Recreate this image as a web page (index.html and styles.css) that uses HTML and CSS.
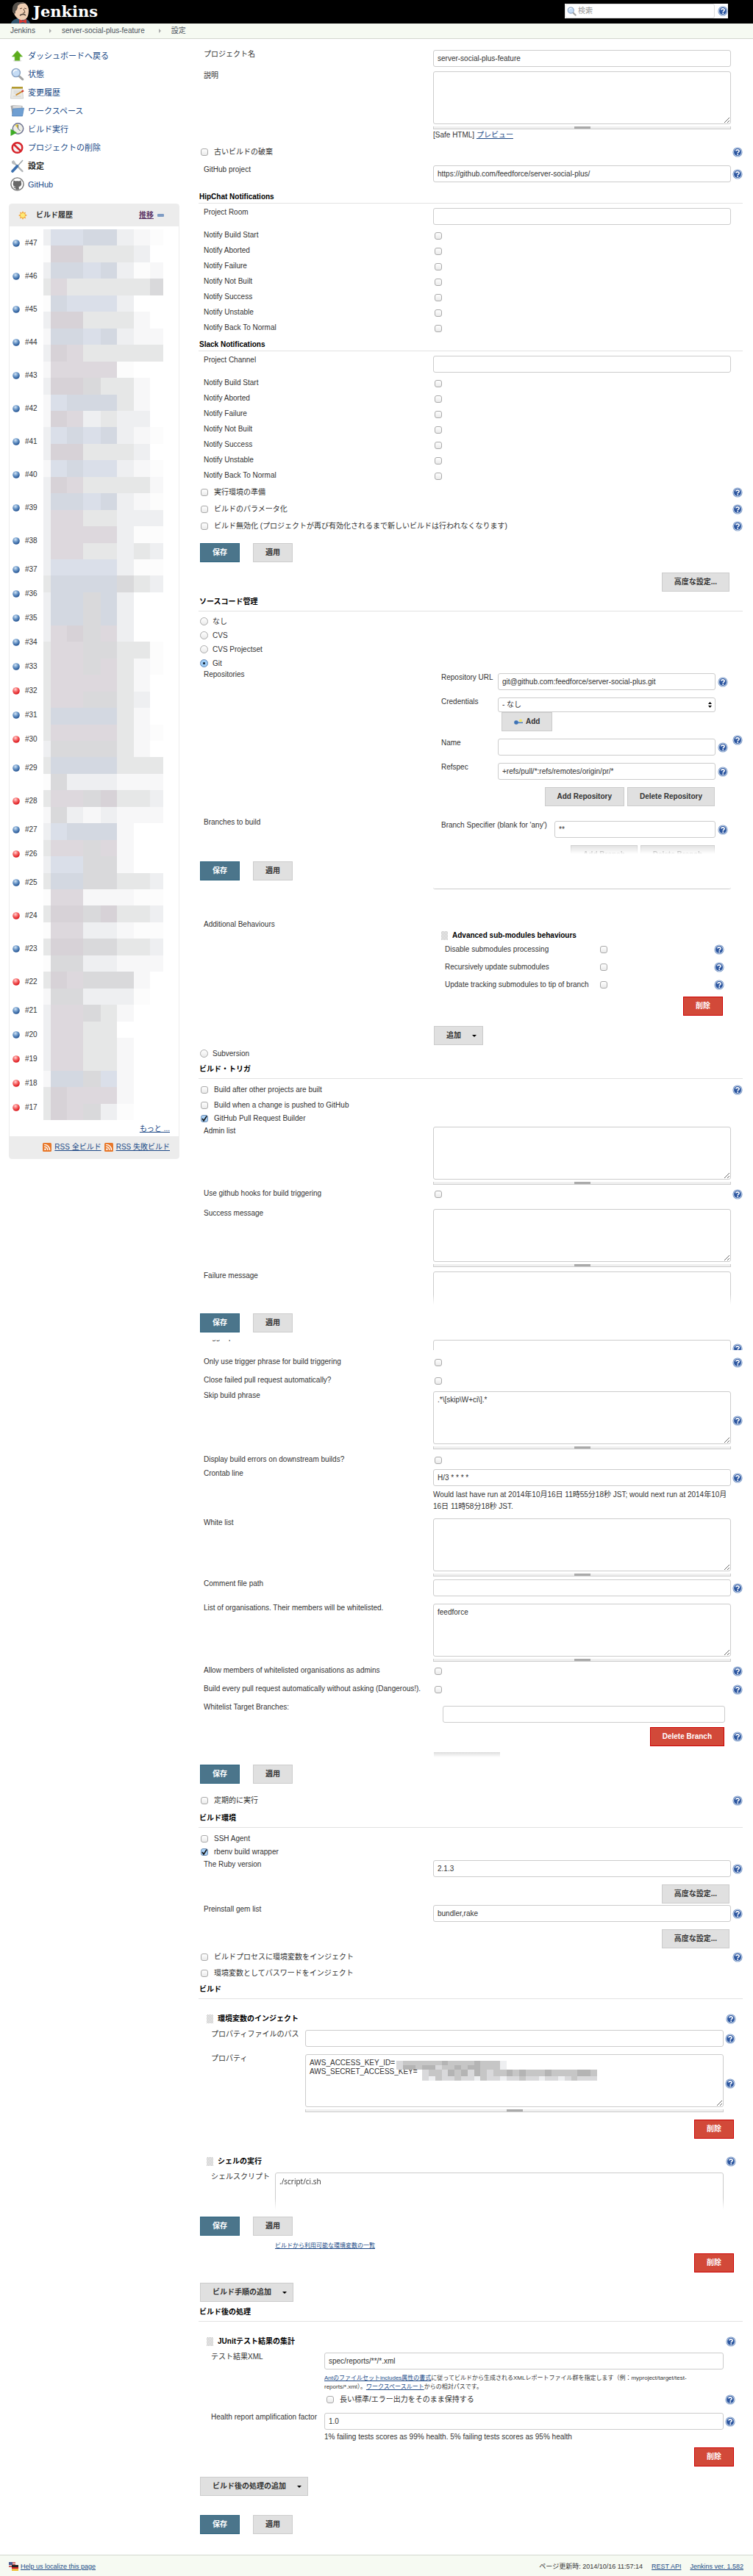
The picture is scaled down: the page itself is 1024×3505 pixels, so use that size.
FILE: index.html
```html
<!DOCTYPE html>
<html lang="ja">
<head>
<meta charset="utf-8">
<meta name="viewport" content="width=device-width, initial-scale=1">
<title>server-social-plus-feature 設定 [Jenkins]</title>
<link rel="stylesheet" href="styles.css">
</head>
<body>
<svg class="sprite" aria-hidden="true">
  <defs>
    <radialGradient id="gBlue" cx="40%" cy="30%" r="70%"><stop offset="0" stop-color="#d5e4f3"/><stop offset=".45" stop-color="#6f9bcb"/><stop offset="1" stop-color="#1f4f8f"/></radialGradient>
    <radialGradient id="gRed" cx="40%" cy="30%" r="70%"><stop offset="0" stop-color="#ffd5d5"/><stop offset=".45" stop-color="#f76a6a"/><stop offset="1" stop-color="#d80f14"/></radialGradient>
  </defs>
  <symbol id="help" viewBox="0 0 14 14"><circle cx="7" cy="7" r="6.6" fill="#7f9cc8"/><circle cx="7" cy="7" r="5.7" fill="#d4e0f0"/><circle cx="7" cy="7" r="4.9" fill="#2c56a0"/><path d="M4.9 5.6C4.9 3.4 9.2 3.3 9.2 5.6C9.2 7 7.2 6.9 7.2 8.5" fill="none" stroke="#fff" stroke-width="1.6"/><circle cx="7.2" cy="10.2" r=".95" fill="#fff"/></symbol>
  <symbol id="ball-blue" viewBox="0 0 10 10"><circle cx="5" cy="5" r="4.8" fill="url(#gBlue)"/></symbol>
  <symbol id="ball-red" viewBox="0 0 10 10"><circle cx="5" cy="5" r="4.8" fill="url(#gRed)"/></symbol>
  <symbol id="rss" viewBox="0 0 12 12"><rect width="12" height="12" rx="1.5" fill="#e8782a"/><circle cx="3.4" cy="8.8" r="1.2" fill="#fff"/><path d="M2.2 5.2a4.6 4.6 0 0 1 4.6 4.7M2.2 2.4a7.4 7.4 0 0 1 7.4 7.5" fill="none" stroke="#fff" stroke-width="1.4"/></symbol>
  <symbol id="lens" viewBox="0 0 18 18"><path d="M11.3 11.3l4.9 4.6" stroke="#a4a4a4" stroke-width="3" stroke-linecap="round"/><circle cx="7.3" cy="7" r="5.6" fill="#c5dcf5" stroke="#8ba4c4" stroke-width="1.5"/><path d="M3.8 6.5a3.6 3.6 0 0 1 5-3" fill="none" stroke="#fff" stroke-width="1.4"/></symbol>
</svg>

<header class="topbar">
  <a class="logo" href="#">
    <svg width="26" height="29" viewBox="0 0 26 29" aria-hidden="true"><path d="M0 29C1 25 5 23 9 22h8c5 1 8 3 9 7z" fill="#33566f"/><path d="M9 21l4 5 4-5z" fill="#fff"/><path d="M3 9C3 2 8 0 13 0s11 3 11 11c0 7-2 13-8 13-7 0-11-5-12-9C2 14 2 11 3 9z" fill="#efcfb4"/><path d="M2 12C1 3 7-1 13 0c3 0 5 1 7 2-5-1-9 0-11 3 0 3-1 6-3 7 0 2 0 3-1 4-1-1-2-2-3-4z" fill="#56514b"/><path d="M12 9l3-1M18 8l3 1M17 9l2 5-3 1" fill="none" stroke="#604838"/><path d="M12 18c3-2 6-2 8 0" fill="none" stroke="#51453d" stroke-width="1.6"/><path d="M11 23l5 2 5-2v6l-5-2-5 2z" fill="#d33833"/></svg>
    <span>Jenkins</span>
  </a>
  <form class="search">
    <label class="search-box"><svg width="13" height="13"><use href="#lens"/></svg><input type="text" placeholder="検索" aria-label="検索"></label>
    <a class="help" href="#" aria-label="ヘルプ"><svg width="14" height="14"><use href="#help"/></svg></a>
  </form>
</header>

<nav class="crumbs"><a href="#">Jenkins</a><i></i><a href="#">server-social-plus-feature</a><i></i><a href="#">設定</a></nav>

<div class="page">
<aside class="side">
  <nav class="tasks">
    <a href="#"><svg width="18" height="18" viewBox="0 0 18 18"><ellipse cx="9" cy="15.8" rx="6" ry="1" fill="#ddd"/><path d="M9 2l7 8h-3.6v5.3H5.6V10H2z" fill="#5cab1c" stroke="#74bd42" stroke-width=".7"/></svg>ダッシュボードへ戻る</a>
    <a href="#"><svg width="18" height="18"><use href="#lens"/></svg>状態</a>
    <a href="#"><svg width="18" height="18" viewBox="0 0 18 18"><path d="M1 3h15l1 14H0z" fill="#ebebe7" stroke="#b9b9b5" stroke-width=".6"/><path d="M1.5 1h15v2.6h-15z" fill="#b39a2e"/><path d="M4 7h9M4 9.500h6M3 14h11" stroke="#c8c8c8" stroke-width=".8"/><path d="M7 12.500l8.500-5" stroke="#c98a2a" stroke-width="2"/><path d="M15 7.800l2.500-1.500" stroke="#d2392d" stroke-width="2.200"/></svg>変更履歴</a>
    <a href="#"><svg width="18" height="18" viewBox="0 0 18 18"><path d="M0 2l4-1 12 1v11H2z" fill="#a8a8a8"/><path d="M3 1.500h12v7H3z" fill="#d8d8d8"/><path d="M3 6l15-1-2 11H2z" fill="#6f9fd2" stroke="#4d80b8" stroke-width=".7"/></svg>ワークスペース</a>
    <a href="#"><svg width="18" height="18" viewBox="0 0 18 18"><circle cx="10" cy="8" r="7.200" fill="#eeeee6" stroke="#6d7391" stroke-width="1.500"/><path d="M10 8L6 3.500a6 6 0 0 1 4-1.500z" fill="#e2c637"/><path d="M10 3v5l3 3" fill="none" stroke="#56607a"/><path d="M0 8.500l8.500 5L0 18z" fill="#3eab25"/></svg>ビルド実行</a>
    <a href="#"><svg width="18" height="18" viewBox="0 0 18 18"><circle cx="9" cy="9" r="6.800" fill="#f4f4f4" stroke="#d7242b" stroke-width="2.500"/><path d="M4.300 4.500l9.400 9" stroke="#d7242b" stroke-width="2.500"/></svg>プロジェクトの削除</a>
    <a class="current" href="#"><svg width="18" height="18" viewBox="0 0 18 18"><path d="M3 3l8 8 5 5" stroke="#b0b4b6" stroke-width="2.400" stroke-linecap="round"/><path d="M1.500 3a3 3 0 0 0 4 3.500L6.500 4 4 1" fill="#b8bcbe"/><path d="M16.500 1L9 9.500" stroke="#9da4a8" stroke-width="1.500"/><path d="M9 9l-6.500 7" stroke="#3b6fae" stroke-width="3.600" stroke-linecap="round"/></svg>設定</a>
    <a href="#"><svg width="19" height="19" viewBox="0 0 19 19"><circle cx="9.500" cy="9.500" r="8.600" fill="#fff" stroke="#777" stroke-width="1.400"/><path d="M4.500 4.300l2.500 1.200c1.700-.5 3.300-.5 5 0l2.500-1.200.4 3.200c1 3.700-.9 5.300-3.600 5.700l.5 1v2.600c-1.500.6-3.100.6-4.600 0v-1.700C5 15.500 5 13.700 4 13l2.900.7.4-.5C4.500 12.700 3 11 4.100 7.500z" fill="#686868"/></svg>GitHub</a>
  </nav>

  <section class="history">
    <div class="history-head"><svg width="12" height="12" viewBox="0 0 12 12"><path d="M6 0l1.300 2.500L10 1.500l-.8 2.700L12 6 9.200 7.500l1 3-2.800-1L6 12 4.600 9.500 1.800 10.500l1-2.800L0 6l2.800-1.600L2 1.500l2.700 1z" fill="#f4aa39"/><circle cx="6" cy="6" r="3" fill="#fdea76"/></svg><b>ビルド履歴</b><a href="#">推移</a><svg class="minus" width="9" height="4" viewBox="0 0 9 4"><rect width="9" height="4" rx="1" fill="#7f9cc4"/></svg></div>
    <div class="history-body">
      <ul class="builds" id="builds">
        <li class="tall"><svg width="10" height="10"><use href="#ball-blue"/></svg><a href="#">#47</a></li>
        <li class="tall"><svg width="10" height="10"><use href="#ball-blue"/></svg><a href="#">#46</a></li>
        <li class="tall"><svg width="10" height="10"><use href="#ball-blue"/></svg><a href="#">#45</a></li>
        <li class="tall"><svg width="10" height="10"><use href="#ball-blue"/></svg><a href="#">#44</a></li>
        <li class="tall"><svg width="10" height="10"><use href="#ball-blue"/></svg><a href="#">#43</a></li>
        <li class="tall"><svg width="10" height="10"><use href="#ball-blue"/></svg><a href="#">#42</a></li>
        <li class="tall"><svg width="10" height="10"><use href="#ball-blue"/></svg><a href="#">#41</a></li>
        <li class="tall"><svg width="10" height="10"><use href="#ball-blue"/></svg><a href="#">#40</a></li>
        <li class="tall"><svg width="10" height="10"><use href="#ball-blue"/></svg><a href="#">#39</a></li>
        <li class="tall"><svg width="10" height="10"><use href="#ball-blue"/></svg><a href="#">#38</a></li>
        <li><svg width="10" height="10"><use href="#ball-blue"/></svg><a href="#">#37</a></li>
        <li><svg width="10" height="10"><use href="#ball-blue"/></svg><a href="#">#36</a></li>
        <li><svg width="10" height="10"><use href="#ball-blue"/></svg><a href="#">#35</a></li>
        <li><svg width="10" height="10"><use href="#ball-blue"/></svg><a href="#">#34</a></li>
        <li><svg width="10" height="10"><use href="#ball-blue"/></svg><a href="#">#33</a></li>
        <li><svg width="10" height="10"><use href="#ball-red"/></svg><a href="#">#32</a></li>
        <li><svg width="10" height="10"><use href="#ball-blue"/></svg><a href="#">#31</a></li>
        <li><svg width="10" height="10"><use href="#ball-red"/></svg><a href="#">#30</a></li>
        <li class="tall"><svg width="10" height="10"><use href="#ball-blue"/></svg><a href="#">#29</a></li>
        <li class="tall"><svg width="10" height="10"><use href="#ball-red"/></svg><a href="#">#28</a></li>
        <li><svg width="10" height="10"><use href="#ball-blue"/></svg><a href="#">#27</a></li>
        <li><svg width="10" height="10"><use href="#ball-red"/></svg><a href="#">#26</a></li>
        <li class="tall"><svg width="10" height="10"><use href="#ball-blue"/></svg><a href="#">#25</a></li>
        <li class="tall"><svg width="10" height="10"><use href="#ball-red"/></svg><a href="#">#24</a></li>
        <li class="tall"><svg width="10" height="10"><use href="#ball-blue"/></svg><a href="#">#23</a></li>
        <li class="tall"><svg width="10" height="10"><use href="#ball-red"/></svg><a href="#">#22</a></li>
        <li><svg width="10" height="10"><use href="#ball-blue"/></svg><a href="#">#21</a></li>
        <li><svg width="10" height="10"><use href="#ball-blue"/></svg><a href="#">#20</a></li>
        <li><svg width="10" height="10"><use href="#ball-red"/></svg><a href="#">#19</a></li>
        <li><svg width="10" height="10"><use href="#ball-red"/></svg><a href="#">#18</a></li>
        <li><svg width="10" height="10"><use href="#ball-red"/></svg><a href="#">#17</a></li>
      </ul>
      <svg class="mosaic" id="mosaic" width="163" height="1212" viewBox="0 0 163 1212" aria-hidden="true"></svg>
    </div>
    <div class="history-more"><a href="#">もっと ...</a></div>
    <div class="history-foot"><svg width="12" height="12"><use href="#rss"/></svg><a href="#">RSS 全ビルド</a><svg width="12" height="12"><use href="#rss"/></svg><a href="#">RSS 失敗ビルド</a></div>
  </section>
</aside>

<main class="main">
<form class="config">
  <div class="row"><label for="name">プロジェクト名</label><input class="field" id="name" type="text" value="server-social-plus-feature"></div>
  <div class="row mt6"><label for="desc">説明</label><div><textarea class="area" id="desc"></textarea><div class="grip-bar"></div><p class="note">[Safe HTML] <a href="#">プレビュー</a></p></div></div>
  <div class="option mt4"><label><input type="checkbox">古いビルドの破棄</label><a class="help" href="#" aria-label="ヘルプ"><svg width="14" height="14"><use href="#help"/></svg></a></div>
  <div class="row mt8"><label for="ghp">GitHub project</label><input class="field" id="ghp" type="text" value="https://github.com/feedforce/server-social-plus/"><a class="help" href="#" aria-label="ヘルプ"><svg width="14" height="14"><use href="#help"/></svg></a></div>

  <h2 class="latin mt12">HipChat Notifications</h2>
  <div class="row mt6"><label for="room">Project Room</label><input class="field" id="room" type="text"></div>
  <div class="row check mt4"><label for="h1">Notify Build Start</label><input id="h1" type="checkbox"></div>
  <div class="row check"><label for="h2">Notify Aborted</label><input id="h2" type="checkbox"></div>
  <div class="row check"><label for="h3">Notify Failure</label><input id="h3" type="checkbox"></div>
  <div class="row check"><label for="h4">Notify Not Built</label><input id="h4" type="checkbox"></div>
  <div class="row check"><label for="h5">Notify Success</label><input id="h5" type="checkbox"></div>
  <div class="row check"><label for="h6">Notify Unstable</label><input id="h6" type="checkbox"></div>
  <div class="row check"><label for="h7">Notify Back To Normal</label><input id="h7" type="checkbox"></div>

  <h2 class="latin mt4">Slack Notifications</h2>
  <div class="row mt6"><label for="channel">Project Channel</label><input class="field" id="channel" type="text"></div>
  <div class="row check mt4"><label for="s1">Notify Build Start</label><input id="s1" type="checkbox"></div>
  <div class="row check"><label for="s2">Notify Aborted</label><input id="s2" type="checkbox"></div>
  <div class="row check"><label for="s3">Notify Failure</label><input id="s3" type="checkbox"></div>
  <div class="row check"><label for="s4">Notify Not Built</label><input id="s4" type="checkbox"></div>
  <div class="row check"><label for="s5">Notify Success</label><input id="s5" type="checkbox"></div>
  <div class="row check"><label for="s6">Notify Unstable</label><input id="s6" type="checkbox"></div>
  <div class="row check"><label for="s7">Notify Back To Normal</label><input id="s7" type="checkbox"></div>
  <div class="option roomy"><label><input type="checkbox">実行環境の準備</label><a class="help" href="#" aria-label="ヘルプ"><svg width="14" height="14"><use href="#help"/></svg></a></div>
  <div class="option roomy"><label><input type="checkbox">ビルドのパラメータ化</label><a class="help" href="#" aria-label="ヘルプ"><svg width="14" height="14"><use href="#help"/></svg></a></div>
  <div class="option roomy"><label><input type="checkbox">ビルド無効化 (プロジェクトが再び有効化されるまで新しいビルドは行われなくなります)</label><a class="help" href="#" aria-label="ヘルプ"><svg width="14" height="14"><use href="#help"/></svg></a></div>

  <div class="savebar mt12"><button class="btn primary" type="submit">保存</button><button class="btn" type="button">適用</button></div>
  <div class="actions mt14"><button class="btn" type="button">高度な設定...</button></div>

  <h2 class="mt2">ソースコード管理</h2>
  <div class="radio mt4"><label><input type="radio" name="scm">なし</label></div>
  <div class="radio"><label><input type="radio" name="scm">CVS</label></div>
  <div class="radio"><label><input type="radio" name="scm">CVS Projectset</label></div>
  <div class="radio"><label><input type="radio" name="scm" checked>Git</label></div>
  <div class="row"><span class="label">Repositories</span>
    <div class="nested repo">
      <label for="url">Repository URL</label><input class="field" id="url" type="text" value="git@github.com:feedforce/server-social-plus.git"><a class="help" href="#" aria-label="ヘルプ"><svg width="14" height="14"><use href="#help"/></svg></a>
      <label for="cred">Credentials</label><div><select class="select" id="cred"><option>- なし</option></select><button class="btn add" type="button"><svg width="12" height="9" viewBox="0 0 12 9"><circle cx="3" cy="5" r="2.800" fill="#3e73b5"/><path d="M5 4.500h7v1.600H5z" fill="#4b7fc0"/><circle cx="9" cy="2.400" r="2" fill="#f3e66b"/></svg>Add</button></div><span></span>
      <label for="rname">Name</label><input class="field" id="rname" type="text"><a class="help" href="#" aria-label="ヘルプ"><svg width="14" height="14"><use href="#help"/></svg></a>
      <label for="refspec">Refspec</label><input class="field" id="refspec" type="text" value="+refs/pull/*:refs/remotes/origin/pr/*"><a class="help" href="#" aria-label="ヘルプ"><svg width="14" height="14"><use href="#help"/></svg></a>
      <div class="pair"><button class="btn" type="button">Add Repository</button><button class="btn" type="button">Delete Repository</button></div>
    </div>
    <a class="help" href="#" aria-label="ヘルプ"><svg width="14" height="14"><use href="#help"/></svg></a>
  </div>
  <div class="row mt12"><span class="label">Branches to build</span>
    <div class="nested branch">
      <label for="spec">Branch Specifier (blank for 'any')</label><input class="field" id="spec" type="text" value="**"><a class="help" href="#" aria-label="ヘルプ"><svg width="14" height="14"><use href="#help"/></svg></a>
      <div class="pair cut"><button class="btn" type="button">Add Branch</button><button class="btn" type="button">Delete Branch</button></div>
    </div>
  </div>

  <div class="savebar mt10"><button class="btn primary" type="submit">保存</button><button class="btn" type="button">適用</button></div>
  <div class="row mt8"><span></span><div class="edge"></div></div>
  <div class="row mt42"><span class="label">Additional Behaviours</span>
    <div class="behaviours">
      <h3><i class="drag"></i>Advanced sub-modules behaviours</h3>
      <div class="sub"><label for="b1">Disable submodules processing</label><input id="b1" type="checkbox"><a class="help" href="#" aria-label="ヘルプ"><svg width="14" height="14"><use href="#help"/></svg></a></div>
      <div class="sub"><label for="b2">Recursively update submodules</label><input id="b2" type="checkbox"><a class="help" href="#" aria-label="ヘルプ"><svg width="14" height="14"><use href="#help"/></svg></a></div>
      <div class="sub"><label for="b3">Update tracking submodules to tip of branch</label><input id="b3" type="checkbox"><a class="help" href="#" aria-label="ヘルプ"><svg width="14" height="14"><use href="#help"/></svg></a></div>
      <div class="right mt4"><button class="btn danger" type="button">削除</button></div>
      <button class="btn menu mt14" type="button">追加<i></i></button>
    </div>
  </div>
  <div class="radio mt2"><label><input type="radio" name="scm">Subversion</label></div>

  <h2>ビルド・トリガ</h2>
  <div class="option mt4"><label><input type="checkbox">Build after other projects are built</label><a class="help" href="#" aria-label="ヘルプ"><svg width="14" height="14"><use href="#help"/></svg></a></div>
  <div class="option"><label><input type="checkbox">Build when a change is pushed to GitHub</label></div>
  <div class="option tight"><label><input type="checkbox" checked>GitHub Pull Request Builder</label></div>
  <div class="row mt4"><label for="admins">Admin list</label><div><textarea class="area" id="admins"></textarea><div class="grip-bar"></div></div></div>
  <div class="row check mt2"><label for="hooks">Use github hooks for build triggering</label><input id="hooks" type="checkbox"><a class="help" href="#" aria-label="ヘルプ"><svg width="14" height="14"><use href="#help"/></svg></a></div>
  <div class="row mt10"><label for="ok">Success message</label><div><textarea class="area" id="ok"></textarea><div class="grip-bar"></div></div></div>
  <div class="row mt6"><label for="ng">Failure message</label><div class="fade"><textarea class="area open" id="ng"></textarea></div></div>

  <div class="savebar mt12"><button class="btn primary" type="submit">保存</button><button class="btn" type="button">適用</button></div>
  <div class="row peek mt10"><label for="phrase">Trigger phrase</label><input class="field" id="phrase" type="text"><a class="help" href="#" aria-label="ヘルプ"><svg width="14" height="14"><use href="#help"/></svg></a></div>
  <div class="row check mt6"><label for="only">Only use trigger phrase for build triggering</label><input id="only" type="checkbox"><a class="help" href="#" aria-label="ヘルプ"><svg width="14" height="14"><use href="#help"/></svg></a></div>
  <div class="row check mt4"><label for="close">Close failed pull request automatically?</label><input id="close" type="checkbox"></div>
  <div class="row mt4"><label for="skip">Skip build phrase</label><div><textarea class="area" id="skip">.*\[skip\W+ci\].*</textarea><div class="grip-bar"></div></div><a class="help" href="#" aria-label="ヘルプ"><svg width="14" height="14"><use href="#help"/></svg></a></div>
  <div class="row check mt4"><label for="errs">Display build errors on downstream builds?</label><input id="errs" type="checkbox"></div>
  <div class="row mt2"><label for="cron">Crontab line</label><input class="field" id="cron" type="text" value="H/3 * * * *"><a class="help" href="#" aria-label="ヘルプ"><svg width="14" height="14"><use href="#help"/></svg></a><p class="note under mt4">Would last have run at 2014年10月16日 11時55分18秒 JST; would next run at 2014年<wbr>10月16日 11時58分18秒 JST.</p></div>
  <div class="row mt8"><label for="white">White list</label><div><textarea class="area" id="white"></textarea><div class="grip-bar"></div></div></div>
  <div class="row mt4"><label for="cfp">Comment file path</label><input class="field" id="cfp" type="text"><a class="help" href="#" aria-label="ヘルプ"><svg width="14" height="14"><use href="#help"/></svg></a></div>
  <div class="row mt10"><label for="orgs">List of organisations. Their members will be whitelisted.</label><div><textarea class="area" id="orgs">feedforce</textarea><div class="grip-bar"></div></div></div>
  <div class="row check mt2"><label for="allow">Allow members of whitelisted organisations as admins</label><input id="allow" type="checkbox"><a class="help" href="#" aria-label="ヘルプ"><svg width="14" height="14"><use href="#help"/></svg></a></div>
  <div class="row check mt4"><label for="every">Build every pull request automatically without asking (Dangerous!).</label><input id="every" type="checkbox"><a class="help" href="#" aria-label="ヘルプ"><svg width="14" height="14"><use href="#help"/></svg></a></div>
  <div class="row mt8"><label for="target">Whitelist Target Branches:</label><div class="targets"><input class="field" id="target" type="text"><div class="right mt6"><button class="btn danger" type="button">Delete Branch</button></div></div><a class="help low" href="#" aria-label="ヘルプ"><svg width="14" height="14"><use href="#help"/></svg></a></div>
  <div class="row mt8"><span></span><div class="sliver"></div></div>

  <div class="savebar mt10"><button class="btn primary" type="submit">保存</button><button class="btn" type="button">適用</button></div>
  <div class="option mt12"><label><input type="checkbox">定期的に実行</label><a class="help" href="#" aria-label="ヘルプ"><svg width="14" height="14"><use href="#help"/></svg></a></div>

  <h2 class="mt2">ビルド環境</h2>
  <div class="option mt4"><label><input type="checkbox">SSH Agent</label></div>
  <div class="option tight"><label><input type="checkbox" checked>rbenv build wrapper</label></div>
  <div class="row mt4"><label for="ruby">The Ruby version</label><input class="field" id="ruby" type="text" value="2.1.3"><a class="help" href="#" aria-label="ヘルプ"><svg width="14" height="14"><use href="#help"/></svg></a></div>
  <div class="actions mt10"><button class="btn" type="button">高度な設定...</button></div>
  <div class="row mt2"><label for="gems">Preinstall gem list</label><input class="field" id="gems" type="text" value="bundler,rake"><a class="help" href="#" aria-label="ヘルプ"><svg width="14" height="14"><use href="#help"/></svg></a></div>
  <div class="actions mt10"><button class="btn" type="button">高度な設定...</button></div>
  <div class="option roomy"><label><input type="checkbox">ビルドプロセスに環境変数をインジェクト</label><a class="help" href="#" aria-label="ヘルプ"><svg width="14" height="14"><use href="#help"/></svg></a></div>
  <div class="option"><label><input type="checkbox">環境変数としてパスワードをインジェクト</label></div>

  <h2>ビルド</h2>
  <section class="step mt20">
    <h3><i class="drag"></i>環境変数のインジェクト<a class="help" href="#" aria-label="ヘルプ"><svg width="14" height="14"><use href="#help"/></svg></a></h3>
    <div class="fields inject mt8">
      <label for="ppath">プロパティファイルのパス</label><input class="field" id="ppath" type="text"><a class="help" href="#" aria-label="ヘルプ"><svg width="14" height="14"><use href="#help"/></svg></a>
      <label for="props">プロパティ</label><div class="redacted"><textarea class="area" id="props">AWS_ACCESS_KEY_ID=
AWS_SECRET_ACCESS_KEY=</textarea><svg class="mask" id="mask" width="274" height="31" viewBox="0 0 274 31" aria-hidden="true"></svg><div class="grip-bar"></div></div><a class="help" href="#" aria-label="ヘルプ"><svg width="14" height="14"><use href="#help"/></svg></a>
    </div>
    <div class="right mt10"><button class="btn danger" type="button">削除</button></div>
  </section>
  <section class="step mt24">
    <h3><i class="drag"></i>シェルの実行<a class="help" href="#" aria-label="ヘルプ"><svg width="14" height="14"><use href="#help"/></svg></a></h3>
    <div class="fields shell mt8"><label for="sh">シェルスクリプト</label><div class="fade tall"><textarea class="area open sans" id="sh">./script/ci.sh</textarea></div></div>
  </section>

  <div class="savebar mt10"><button class="btn primary" type="submit">保存</button><button class="btn" type="button">適用</button></div>
  <section class="step mt8">
    <div class="fields shell"><span></span><p class="tiny"><a href="#">ビルドから利用可能な環境変数の一覧</a></p></div>
    <div class="right mt4"><button class="btn danger" type="button">削除</button></div>
  </section>
  <div class="mt14"><button class="btn menu" type="button">ビルド手順の追加<i></i></button></div>

  <h2 class="mt2">ビルド後の処理</h2>
  <section class="step mt20">
    <h3><i class="drag"></i>JUnitテスト結果の集計<a class="help" href="#" aria-label="ヘルプ"><svg width="14" height="14"><use href="#help"/></svg></a></h3>
    <div class="fields junit mt8">
      <label for="xml">テスト結果XML</label><div><input class="field" id="xml" type="text" value="spec/reports/**/*.xml"><p class="tiny mt6"><a href="#">Antのファイルセットincludes属性の書式</a>に従ってビルドから生成されるXMLレポートファイル群を指定します（例：myproject/target/test-<br>reports/*.xml）。<a href="#">ワークスペースルート</a>からの相対パスです。</p></div><span></span>
      <span></span><label class="keep"><input type="checkbox">長い標準/エラー出力をそのまま保持する</label><a class="help" href="#" aria-label="ヘルプ"><svg width="14" height="14"><use href="#help"/></svg></a>
      <label class="mt8" for="factor">Health report amplification factor</label><input class="field mt8" id="factor" type="text" value="1.0"><a class="help mt8" href="#" aria-label="ヘルプ"><svg width="14" height="14"><use href="#help"/></svg></a>
      <span></span><p class="note mt2">1% failing tests scores as 99% health. 5% failing tests scores as 95% health</p>
    </div>
    <div class="right mt6"><button class="btn danger" type="button">削除</button></div>
  </section>
  <div class="mt14"><button class="btn menu" type="button">ビルド後の処理の追加<i></i></button></div>

  <div class="savebar mt26"><button class="btn primary" type="submit">保存</button><button class="btn" type="button">適用</button></div>
</form>
</main>
</div>

<footer class="footer">
  <a class="localize" href="#"><svg width="13" height="13" viewBox="0 0 13 13"><path d="M0 1h9v7H0z" fill="#c9605c"/><path d="M0 3h9M0 5.500h9" stroke="#f3e7e7"/><path d="M0 1h5v4H0z" fill="#4c5c93"/><path d="M4 5h9v3H4z" fill="#222"/><path d="M4 8h9v2.500H4z" fill="#d32525"/><path d="M4 10.500h9V13H4z" fill="#edc238"/></svg>Help us localize this page</a>
  <span>ページ更新時: 2014/10/16 11:57:14</span><a href="#">REST API</a><a href="#">Jenkins ver. 1.582</a>
</footer>
<script src="mosaic.js"></script>
</body>
</html>
```
FILE: styles.css
```css
* { box-sizing: border-box; }
body {
  margin: 0;
  background: #fff;
  color: #333;
  font: 10px/12px "Liberation Sans", "Noto Sans CJK JP", sans-serif;
}
p, h2, h3, ul { margin: 0; padding: 0; }
a { color: #204a87; }
svg { display: block; flex: none; }
input, textarea, select, button { font: inherit; color: inherit; margin: 0; }
.sprite { position: absolute; width: 0; height: 0; }

.mt2 { margin-top: 2px; }
.mt4 { margin-top: 4px; }
.mt6 { margin-top: 6px; }
.mt8 { margin-top: 8px; }
.mt10 { margin-top: 10px; }
.mt12 { margin-top: 12px; }
.mt14 { margin-top: 14px; }
.mt20 { margin-top: 20px; }
.mt24 { margin-top: 24px; }
.mt26 { margin-top: 26px; }
.mt42 { margin-top: 42px; }

/* header */
.topbar {
  display: flex;
  justify-content: space-between;
  height: 32px;
  background: #000;
}
.logo {
  display: flex;
  gap: 4px;
  padding: 3px 0 0 15px;
  color: #fff;
  font: bold 21px/25px "DejaVu Serif", serif;
  text-decoration: none;
}
.search {
  display: flex;
  align-items: center;
  width: 222px;
  height: 20px;
  margin: 5px 34px 0 0;
  background: #fff;
}
.search-box {
  display: flex;
  flex: 1;
  align-items: center;
  gap: 2px;
  height: 20px;
  margin-right: 4px;
  padding-left: 2px;
  border: 1px solid #ddd;
  border-radius: 3px;
}
.search-box input { width: 100%; border: 0; padding: 0; outline: 0; background: none; }
.search-box input::placeholder { color: #999; }
.crumbs {
  display: flex;
  align-items: center;
  height: 21px;
  padding-left: 14px;
  border-bottom: 1px solid #d3d7cf;
  background: #f6faf2;
}
.crumbs a { color: #4d545d; text-decoration: none; }
.crumbs i {
  margin: 0 14px 0 19px;
  border: 3px solid transparent;
  border-left-color: #aaa;
  border-right: 0;
}

/* columns */
.page { display: flex; align-items: flex-start; padding: 0 14px 28px 12px; }
.side { width: 232px; flex: none; margin-right: 26px; }
.main { flex: 1; min-width: 0; padding-top: 15px; }

.tasks { padding: 10px 0 0 2px; }
.tasks a {
  display: flex;
  align-items: center;
  gap: 5px;
  height: 25px;
  font-size: 11px;
  text-decoration: none;
}
.tasks svg { width: 19px; }
.tasks .current { color: #222; font-weight: bold; }

.history { margin-top: 14px; border: 1px solid #ececec; border-radius: 4px; }
.history-head {
  display: flex;
  align-items: center;
  height: 30px;
  padding: 0 20px 0 12px;
  background: #ececec;
}
.history-head b { flex: 1; margin-left: 12px; }
.history-head a { margin-right: 5px; color: #5c3566; font-weight: bold; }
.history-body { display: flex; align-items: flex-start; }
.builds { flex: none; width: 46px; padding-left: 4px; list-style: none; }
.builds li { display: flex; align-items: center; gap: 7px; height: 33px; }
.builds .tall { height: 45px; }
.builds a { color: #333; text-decoration: none; }
.mosaic { margin-top: 4px; }
.history-more { padding: 6px 12px 4px 0; text-align: right; }
.history-foot {
  display: flex;
  align-items: center;
  justify-content: flex-end;
  gap: 4px;
  height: 30px;
  padding-right: 12px;
  background: #ececec;
}

/* form rows */
.row {
  display: grid;
  grid-template-columns: 319px minmax(0, 1fr) 16px;
  align-items: start;
}
.row > label, .row > .label { padding-left: 7px; white-space: nowrap; }
.check { height: 21px; align-items: center; }
.check > label { padding-bottom: 2px; }
.check > input { margin-left: 2px; }
.help { align-self: center; justify-self: end; margin-left: auto; }
.low { align-self: end; padding-bottom: 6px; }
.under { grid-column: 2; }
.note { line-height: 16px; }
.tiny { font-size: 8px; }

.option { display: flex; height: 21px; align-items: center; }
.option label { display: flex; align-items: center; gap: 8px; padding-left: 3px; }
.roomy { height: 23px; }
.tight { height: 15px; }
.radio label { display: flex; align-items: center; gap: 6px; height: 19px; padding-left: 2px; }

h2 {
  padding-left: 1px;
  border-bottom: 1px solid #e2e2e2;
  color: #000;
  font-size: 10px;
  line-height: 24px;
}
h2.latin { line-height: 16px; }
h3 { display: flex; align-items: center; gap: 6px; height: 14px; color: #000; font-size: 10px; }
.drag {
  width: 9px;
  height: 12px;
  background: repeating-conic-gradient(#bbb 0 25%, #fff 0 50%) 0 0 / 2px 2px;
}

.field, .area, .select {
  display: block;
  width: 100%;
  border: 1px solid #ccc;
  border-radius: 3px;
  background: #fff;
  outline: 0;
}
.field { height: 23px; padding: 0 5px; }
.area { height: 72px; padding: 5px; resize: vertical; }
.grip-bar {
  height: 4px;
  margin-top: 3px;
  border: solid #ccc;
  border-width: 0 1px 1px;
  background: linear-gradient(#aaa, #aaa) center / 22px 3px no-repeat #f0f0f0;
}
.select {
  height: 20px;
  padding: 0 5px;
  appearance: none;
  background: url("data:image/svg+xml,%3Csvg xmlns='http://www.w3.org/2000/svg' width='5' height='8'%3E%3Cpath d='M0 3L2.500 0L5 3zM0 5L2.500 8L5 5z'/%3E%3C/svg%3E") right 4px center no-repeat #fff;
}

input[type="checkbox"], input[type="radio"] {
  flex: none;
  width: 10px;
  height: 10px;
  appearance: none;
  border: 1px solid #aaa;
  border-radius: 3px;
  background: linear-gradient(#fff, #eaeaea);
}
input[type="radio"] { width: 11px; height: 11px; border-radius: 50%; }
input[type="checkbox"]:checked {
  border-color: #6f8fb5;
  background: url("data:image/svg+xml,%3Csvg xmlns='http://www.w3.org/2000/svg' width='8' height='8'%3E%3Cpath d='M1 4l2 3L7.500 0' fill='none' stroke='%23111' stroke-width='1.600'/%3E%3C/svg%3E") center no-repeat #a9d0f5;
}
input[type="radio"]:checked {
  border-color: #5f87b8;
  background: radial-gradient(circle, #123 0 1px, #9fcdf6 2px);
}

/* buttons */
.btn {
  height: 26px;
  padding: 0 16px;
  border: 1px solid #ccc;
  background: #e0e0e0;
  color: #333;
  font-weight: bold;
  white-space: nowrap;
}
.primary { border-color: #2f6580; background: #4b758b; color: #fff; }
.danger { border-color: #c00; background: #d24939; color: #fff; }
.menu { display: flex; align-items: center; gap: 15px; padding-right: 8px; }
.menu i { border: 3px solid transparent; border-top-color: #000; border-bottom: 0; }
.savebar { display: flex; gap: 18px; padding-left: 2px; }
.actions { display: flex; justify-content: flex-end; padding-right: 18px; }
.config > div > .menu { margin-left: 2px; }
.right { display: flex; justify-content: flex-end; }

/* git repositories */
.nested {
  display: grid;
  grid-template-columns: 77px minmax(0, 1fr) 17px;
  row-gap: 10px;
  align-items: start;
  padding: 4px 4px 4px 11px;
}
.nested label { white-space: nowrap; }
.branch { grid-template-columns: 154px minmax(0, 1fr) 17px; padding-bottom: 0; }
.add { display: flex; align-items: center; gap: 4px; margin-left: 5px; }
.pair { display: flex; grid-column: 1 / 3; justify-content: flex-end; gap: 4px; padding-right: 1px; }
.cut {
  height: 12px;
  overflow: hidden;
  -webkit-mask-image: linear-gradient(#000, transparent);
  mask-image: linear-gradient(#000, transparent);
}
.edge { height: 4px; border-bottom: 1px solid #ccc; border-radius: 0 0 3px 3px; }

.behaviours { padding: 14px 9px 0 1px; }
.behaviours h3 { padding-left: 10px; }
.sub { display: grid; grid-template-columns: 211px 1fr 14px; align-items: center; height: 24px; padding-left: 15px; }
.behaviours .right { padding-right: 2px; }

/* fields that run out under the floating save bar */
.fade {
  height: 45px;
  overflow: hidden;
  -webkit-mask-image: linear-gradient(#000 70%, transparent);
  mask-image: linear-gradient(#000 70%, transparent);
}
.fade.tall { height: 50px; }
.sans { font-family: "Open Sans", sans-serif; }
.peek { height: 14px; overflow: hidden; align-items: end; }
.peek label { align-self: start; margin-top: -9px; }
.sliver { width: 90px; height: 7px; margin-left: 1px; background: linear-gradient(#ddd, #fff); }
.targets { padding: 4px 8px 0 13px; }
.targets .right { padding-right: 1px; }

/* build steps */
.step { padding: 0 10px 0 11px; }
.step h3 .help { margin-right: -1px; }
.step .right { padding-right: 2px; }
.fields { display: grid; row-gap: 10px; align-items: start; padding-left: 6px; }
.fields > label { white-space: nowrap; }
.inject { grid-template-columns: 128px minmax(0, 1fr) 16px; }
.shell { grid-template-columns: 87px minmax(0, 1fr) 16px; }
.junit { grid-template-columns: 154px minmax(0, 1fr) 16px; row-gap: 0; }
.keep { display: flex; align-items: center; gap: 8px; height: 21px; padding-left: 3px; }
.redacted { position: relative; }
.mask { position: absolute; left: 124px; top: 5px; }

.footer {
  display: flex;
  align-items: center;
  gap: 12px;
  height: 30px;
  padding: 0 13px 0 12px;
  border-top: 1px solid #d3d7cf;
  background: #f6faf2;
  font-size: 9px;
}
.localize { display: flex; align-items: center; gap: 3px; margin-right: auto; }
```
FILE: mosaic.js
```js
// Draws the pixelated blocks that hide build dates and secret keys.
const NS = 'http://www.w3.org/2000/svg';
const tones = {
  w: '#fcfcfc', v: '#f7f7f8', l: '#eeeff1', g: '#e6e7e7', G: '#d9d9db',
  b: '#d3d8e1', B: '#dadfe9', p: '#d7d2d7', P: '#ddd8dd',
  m: '#c6c6c6', n: '#b4b4b4'
};

function draw(id, rows, xs, ys) {
  const svg = document.getElementById(id);
  rows.forEach((row, r) => {
    [...row].forEach((key, c) => {
      if (!tones[key]) return;
      const rect = document.createElementNS(NS, 'rect');
      rect.setAttribute('x', xs(c));
      rect.setAttribute('y', ys(r));
      rect.setAttribute('width', xs(c + 1) - xs(c));
      rect.setAttribute('height', ys(r + 1) - ys(r));
      rect.setAttribute('fill', tones[key]);
      rect.setAttribute('shape-rendering', 'crispEdges');
      svg.appendChild(rect);
    });
  });
}

const columns = [0, 10, 32, 54, 78, 100, 123, 145, 163];
draw('mosaic', [
  'lBBbblvw', 'wppgggl.', 'lbbBblwv', 'gPgggggG', 'wbBBBl..', 'lppgggv.',
  'vbbBblvv', 'lpPggggg', 'vPPPPw..', 'lppGggv.', 'vBbbbgv.', 'vpPlgll.',
  'lBbBblvw', 'lppgggl.', 'vBbBBlvw', 'lpPggggv', 'lbbBblvw', 'lPPgglll',
  'lPPPPlww', 'lPPgglgl', 'lBBBBlww', 'gbbbbGgl', 'lbbGbl..', 'lbbGbl..',
  'lPpGPl..', 'gPPGGggw', 'gPPGPgvw', 'gPPPPgv.', 'gPPGGgl.', 'gbbbbgv.',
  'gPPPPgvw', 'lGGGGgv.', 'gbbbbggg', 'wGlllvvv', 'gPPGpggl', 'vGlvlvvv',
  'lBbbbv..', 'gPPGPv..', 'lBBGGv..', 'gbbGGggl', 'wPPvvvww', 'gppGpggl',
  'wPPllvww', 'gppGGggl', 'wGGllvvv', 'gpPGGGv.', 'vGGlllw.', 'lPPGgv..',
  'lPPgg...', 'lPPggv..', 'lPPggv..', 'vbbGBv..', 'gpPPPv..', 'gpPGlw..'
], c => columns[c], r => Math.round(r * 22.45));

draw('mask', [
  'Gmmmmmmnmmmmnmmml..............',
  'GnnmnnGmmnmnnmmml..............',
  '....GmmGnmnGnmGmmnmnmmmnmmmmnnm',
  '....GlmGGmGGlmGGlGGmGGlGGlGmGGG'
], c => Math.round(c * 8.8), r => [4, 10, 16, 25, 34][r]);
```
